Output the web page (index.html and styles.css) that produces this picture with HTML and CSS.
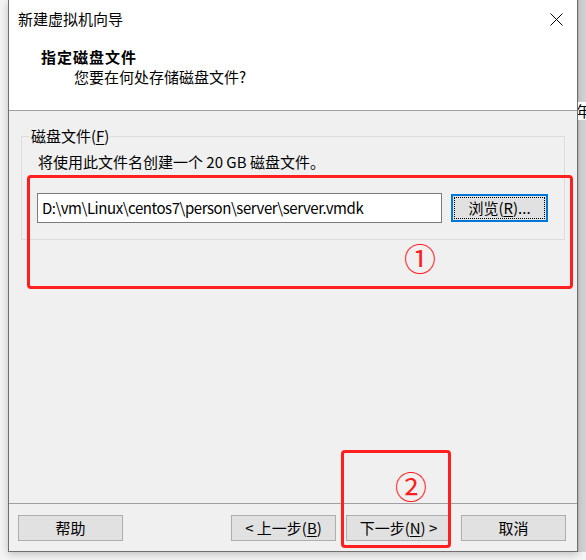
FILE: index.html
```html
<!DOCTYPE html>
<html lang="zh-CN">
<head>
<meta charset="utf-8">
<title>新建虚拟机向导</title>
<link rel="stylesheet" href="styles.css">
</head>
<body>
<div class="desk">
  <div class="window">
    <div class="titlebar">
      <span class="title">新建虚拟机向导</span>
      <svg class="close" width="13" height="13" viewBox="0 0 13 13"><path d="M0.5 0.5 L12.5 12.5 M12.5 0.5 L0.5 12.5" stroke="#000" stroke-width="1" fill="none"/></svg>
    </div>
    <div class="header">
      <div class="h-title">指定磁盘文件</div>
      <div class="h-sub">您要在何处存储磁盘文件?</div>
    </div>
    <div class="body">
      <fieldset class="group">
        <legend>磁盘文件(<u>F</u>)</legend>
        <div class="desc">将使用此文件名创建一个 20 GB 磁盘文件。</div>
        <div class="row">
          <div class="textbox">D:\vm\Linux\centos7\person\server\server.vmdk</div>
          <div class="btn browse"><span class="focus">浏览(<u>R</u>)...</span></div>
        </div>
      </fieldset>
    </div>
    <div class="footer">
      <div class="btn">帮助</div>
      <div class="spacer"></div>
      <div class="btn">&lt; 上一步(<u>B</u>)</div>
      <div class="btn">下一步(<u>N</u>) &gt;</div>
      <div class="btn">取消</div>
    </div>
  </div>
  <div class="behind"><span class="behind-char">年</span></div>

  <div class="mark mark1"></div>
  <div class="num num1">①</div>
  <div class="mark mark2"></div>
  <div class="num num2">②</div>
</div>
</body>
</html>
```

FILE: styles.css
```css
* { box-sizing: border-box; }
html, body { margin: 0; padding: 0; }
body {
  font-family: "Noto Sans CJK SC", "Noto Sans", sans-serif;
  font-size: 15px;
  color: #000;
  background: #f4f4f4;
}
u { text-decoration: underline; text-underline-offset: 2px; }

.desk {
  position: relative;
  width: 586px;
  height: 560px;
  display: flex;
  background: #f4f4f4;
  overflow: hidden;
}

.window {
  margin-left: 8px;
  width: 570px;
  height: 552px;
  border: 1px solid #6f6f6f;
  border-top: none;
  display: flex;
  flex-direction: column;
  box-shadow: 0 2px 8px rgba(0,0,0,0.22);
  background: #f0f0f0;
}

.titlebar {
  height: 37px;
  flex: none;
  background: #fff;
  display: flex;
  align-items: center;
  justify-content: space-between;
  padding: 0 14px 0 9px;
  line-height: 20px;
}
.close { display: block; margin-top: 1px; }

.header {
  height: 74px;
  flex: none;
  background: #fff;
  border-bottom: 1px solid #a0a0a0;
  padding: 10px 0 0 32px;
  line-height: 20px;
}
.h-title { font-weight: bold; letter-spacing: 1px; }
.h-sub { margin-left: 33px; }

.body {
  flex: 1;
  padding: 16px 12px 0 12px;
}

.group {
  margin: 0;
  width: 544px;
  border: 1px solid #dcdcdc;
  padding: 7px 16px 16px 15px;
  min-width: 0;
}
.group legend {
  padding: 0 1px;
  margin-left: -7px;
  line-height: 18px;
}
.desc {
  line-height: 20px;
  margin-left: 1px;
}
.row {
  display: flex;
  align-items: center;
  margin-top: 21px;
}
.textbox {
  width: 405px;
  height: 30px;
  background: #fff;
  border: 1px solid #7a7a7a;
  padding: 0 4px;
  line-height: 28px;
  white-space: nowrap;
  letter-spacing: -0.45px;
}
.btn {
  width: 105px;
  height: 26px;
  background: #e1e1e1;
  border: 1px solid #adadad;
  display: flex;
  align-items: center;
  justify-content: center;
  line-height: 20px;
}
.browse {
  width: 97px;
  height: 28px;
  margin-left: 9px;
  border: 2px solid #0078d7;
  padding: 1px;
}
.browse .focus {
  flex: 1;
  align-self: stretch;
  border: 1px dotted #000;
  display: flex;
  align-items: center;
  justify-content: center;
}

.footer {
  height: 48px;
  flex: none;
  border-top: 1px solid #a0a0a0;
  display: flex;
  align-items: flex-start;
  padding: 11px 11px 0 9px;
  gap: 10px;
}
.footer .spacer { flex: 1; }

.behind {
  flex: 1;
  height: 552px;
  background: linear-gradient(to right, #9a9a9a 0, #c6c6c6 1px, #d2d2d2 100%);
  overflow: hidden;
  padding-top: 102px;
  line-height: 18px;
}
.behind-char {
  display: block;
  margin-left: -2px;
  font-size: 15px;
  background: #fff;
  width: 10px;
  overflow: hidden;
}

.mark {
  position: absolute;
  border: 3px solid #ff1f1f;
  border-radius: 4px;
}
.mark1 { left: 27px; top: 175px; width: 546px; height: 114px; }
.mark2 { left: 341px; top: 450px; width: 110px; height: 98px; }

.num {
  position: absolute;
  color: #ff1f1f;
  font-size: 32px;
  line-height: 32px;
  width: 40px;
  text-align: center;
}
.num1 { left: 400px; top: 241px; }
.num2 { left: 391px; top: 469px; }
```
